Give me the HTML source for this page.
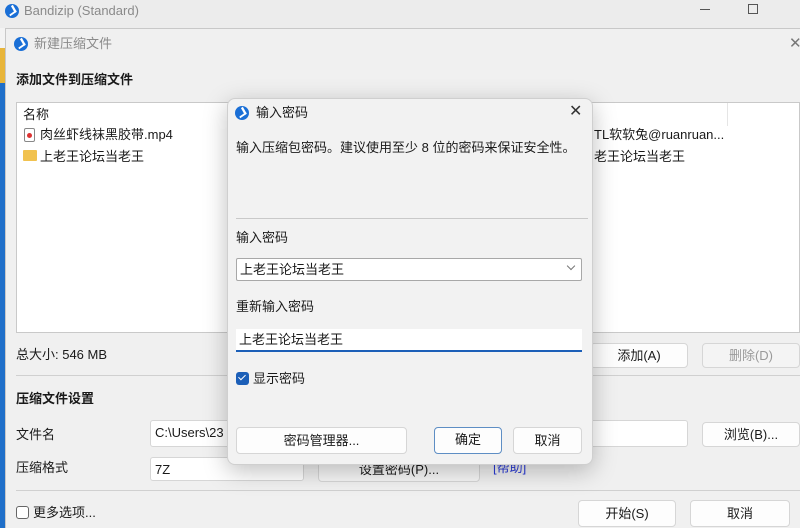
<!DOCTYPE html>
<html><head><meta charset="utf-8"><style>
*{box-sizing:border-box;margin:0;padding:0}
body{width:800px;height:528px;overflow:hidden;background:#f3f3f3;font-family:"Liberation Sans","Noto Sans CJK SC",sans-serif;font-size:13px;color:#1a1a1a;position:relative}
.a{position:absolute;white-space:nowrap;line-height:17px}
.btn{position:absolute;background:#fdfdfd;border:1px solid #d6d6d6;border-radius:4px;text-align:center;font-size:13px}
.ic{position:absolute;width:14px;height:14px;border-radius:50%;background:#1a6fd6}
.ic:after{content:"";position:absolute;left:3px;top:2px;width:5px;height:7px;border-right:2px solid #fff;border-bottom:2px solid #fff;transform:skewX(-15deg) rotate(-40deg)}
</style></head><body>
<div class="a" style="left:0;top:0;width:800px;height:28px;background:#ececec"></div>
<div class="ic" style="left:5px;top:4px"></div>
<div class="a" style="left:24px;top:2px;color:#8a8a8a;font-size:13px">Bandizip (Standard)</div>
<div class="a" style="left:700px;top:9px;width:10px;height:1px;background:#555"></div>
<div class="a" style="left:748px;top:4px;width:10px;height:10px;border:1px solid #555"></div>
<div class="a" style="left:0;top:48px;width:5px;height:35px;background:#e8b53a"></div>
<div class="a" style="left:0;top:83px;width:5px;height:445px;background:#1f6fc9"></div>
<div class="a" style="left:5px;top:28px;width:795px;height:500px;background:#f0f0f0;border-top:1px solid #c8c8c8;border-left:1px solid #c8c8c8"></div>
<div class="ic" style="left:14px;top:37px"></div>
<div class="a" style="left:34px;top:35px;color:#8a8a8a">新建压缩文件</div>
<div class="a" style="left:789px;top:35px;color:#777;font-size:15px">✕</div>
<div class="a" style="left:16px;top:71px;font-weight:bold">添加文件到压缩文件</div>
<div class="a" style="left:16px;top:102px;width:784px;height:231px;background:#fff;border:1px solid #c9c9c9"></div>
<div class="a" style="left:727px;top:103px;width:1px;height:23px;background:#e5e5e5"></div>
<div class="a" style="left:23px;top:106px">名称</div>
<div class="a" style="left:24px;top:128px;width:11px;height:14px;border:1px solid #888;border-radius:2px;background:#fff"></div>
<div class="a" style="left:27px;top:133px;width:5px;height:5px;border-radius:50%;background:#d33"></div>
<div class="a" style="left:40px;top:126px">肉丝虾线袜黑胶带.mp4</div>
<div class="a" style="left:23px;top:150px;width:14px;height:11px;background:#f1c24f;border-radius:1px"></div>
<div class="a" style="left:40px;top:148px">上老王论坛当老王</div>
<div class="a" style="left:594px;top:126px">TL软软兔@ruanruan...</div>
<div class="a" style="left:594px;top:148px">老王论坛当老王</div>
<div class="a" style="left:16px;top:346px">总大小: 546 MB</div>
<div class="btn" style="left:590px;top:343px;width:98px;height:25px;line-height:23px">添加(A)</div>
<div class="btn" style="left:702px;top:343px;width:98px;height:25px;line-height:23px;color:#9a9a9a;background:#f4f4f4">删除(D)</div>
<div class="a" style="left:16px;top:375px;width:784px;height:1px;background:#d0d0d0"></div>
<div class="a" style="left:16px;top:390px;font-weight:bold">压缩文件设置</div>
<div class="a" style="left:16px;top:426px">文件名</div>
<div class="a" style="left:150px;top:420px;width:538px;height:27px;background:#fff;border:1px solid #d6d6d6;border-radius:3px;padding:3px 4px">C:\Users\23</div>
<div class="btn" style="left:702px;top:422px;width:98px;height:25px;line-height:23px">浏览(B)...</div>
<div class="a" style="left:16px;top:459px">压缩格式</div>
<div class="a" style="left:150px;top:457px;width:154px;height:24px;background:#fff;border:1px solid #d6d6d6;border-radius:3px;padding:3px 4px">7Z</div>
<div class="btn" style="left:318px;top:457px;width:162px;height:25px;line-height:23px;background:#f6f6f6">设置密码(P)...</div>
<div class="a" style="left:493px;top:459px;color:#2a3ad6">[帮助]</div>
<div class="a" style="left:16px;top:490px;width:784px;height:1px;background:#d0d0d0"></div>
<div class="a" style="left:16px;top:506px;width:13px;height:13px;border:1px solid #666;border-radius:3px;background:#fff"></div>
<div class="a" style="left:33px;top:504px">更多选项...</div>
<div class="btn" style="left:578px;top:500px;width:98px;height:27px;line-height:25px">开始(S)</div>
<div class="btn" style="left:690px;top:500px;width:100px;height:27px;line-height:25px">取消</div>
<div class="a" style="left:227px;top:98px;width:366px;height:367px;background:#f2f2f2;border:1px solid #cfcfcf;border-radius:8px;box-shadow:0 6px 24px rgba(0,0,0,.25)"></div>
<div class="ic" style="left:235px;top:106px"></div>
<div class="a" style="left:256px;top:104px">输入密码</div>
<div class="a" style="left:569px;top:103px;font-size:16px;color:#333">✕</div>
<div class="a" style="left:236px;top:139px">输入压缩包密码。建议使用至少 8 位的密码来保证安全性。</div>
<div class="a" style="left:236px;top:218px;width:352px;height:1px;background:#c9c9c9"></div>
<div class="a" style="left:236px;top:229px">输入密码</div>
<div class="a" style="left:236px;top:258px;width:346px;height:23px;background:#fff;border:1px solid #a8a8a8;border-radius:2px;padding:2px 3px">上老王论坛当老王</div>
<div class="a" style="left:568px;top:263px;width:6px;height:6px;border-right:1px solid #777;border-bottom:1px solid #777;transform:rotate(45deg)"></div>
<div class="a" style="left:236px;top:298px">重新输入密码</div>
<div class="a" style="left:236px;top:329px;width:346px;height:23px;background:#fff;border-bottom:2px solid #1c5fb8;padding:2px 3px">上老王论坛当老王</div>
<div class="a" style="left:236px;top:372px;width:13px;height:13px;background:#1c5fb8;border-radius:3px"></div>
<div class="a" style="left:240px;top:373px;width:4px;height:7px;border-right:1.5px solid #fff;border-bottom:1.5px solid #fff;transform:rotate(45deg)"></div>
<div class="a" style="left:253px;top:370px">显示密码</div>
<div class="btn" style="left:236px;top:427px;width:171px;height:27px;line-height:25px">密码管理器...</div>
<div class="btn" style="left:434px;top:427px;width:68px;height:27px;line-height:24px;border:1.5px solid #5e8ec4">确定</div>
<div class="btn" style="left:513px;top:427px;width:69px;height:27px;line-height:25px">取消</div>
</body></html>
